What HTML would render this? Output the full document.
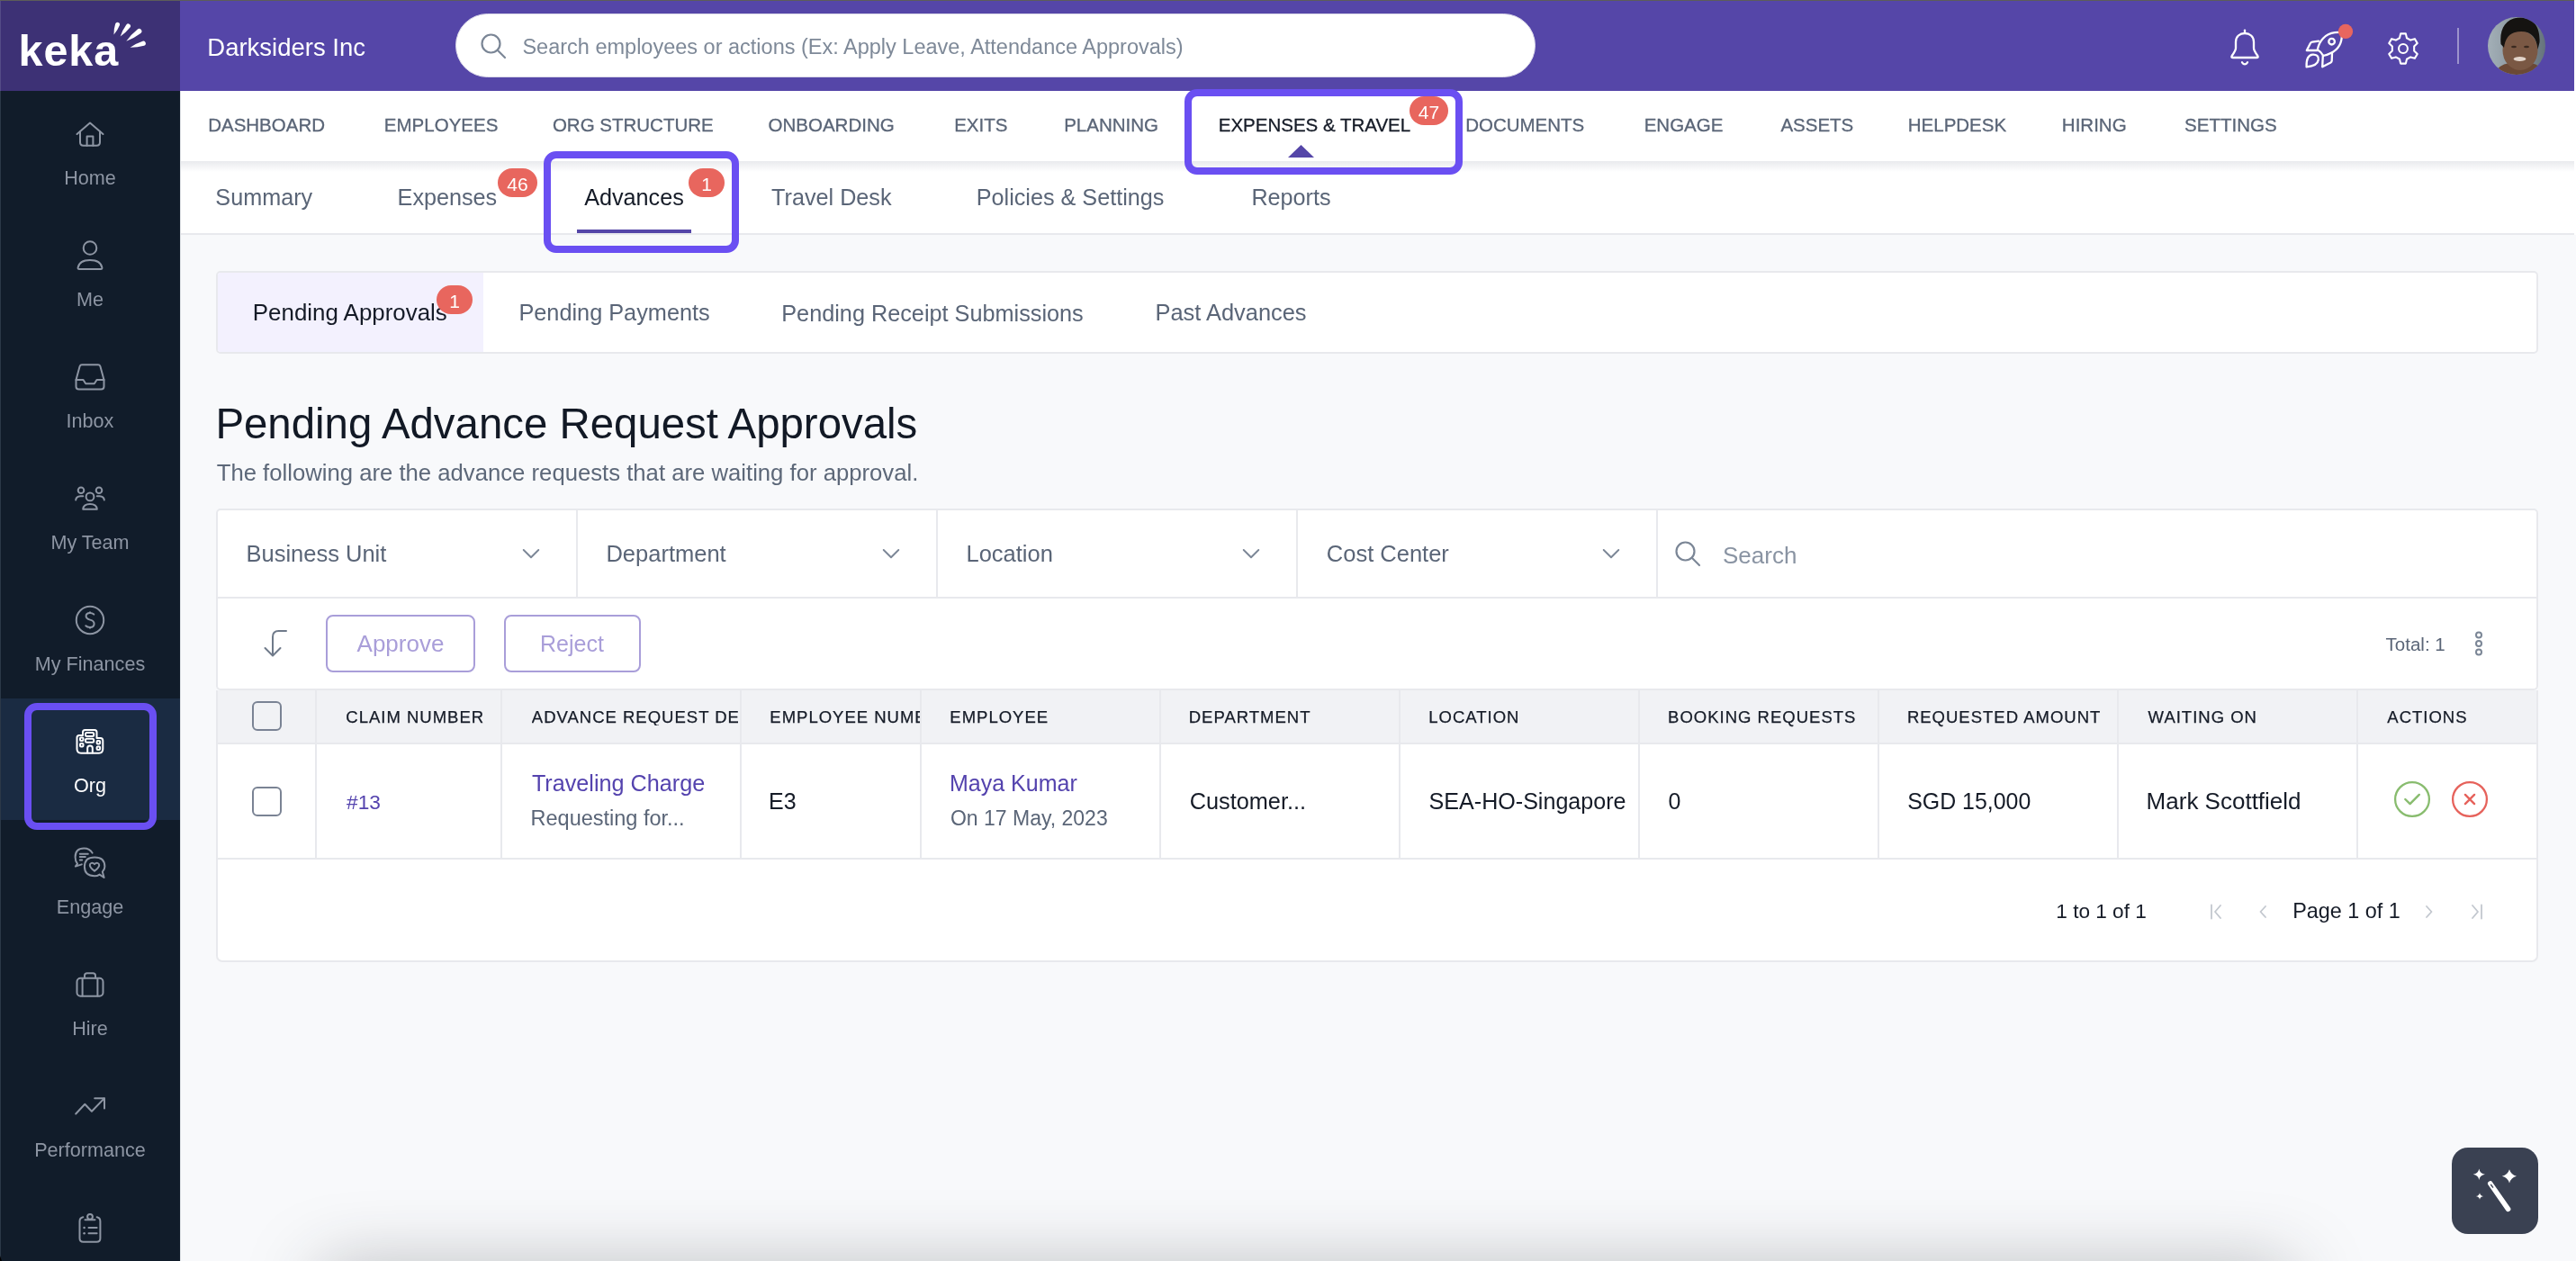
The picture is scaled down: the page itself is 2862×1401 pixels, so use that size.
<!DOCTYPE html>
<html><head><meta charset="utf-8"><title>Keka</title>
<style>
html,body{margin:0;padding:0;}
body{width:2862px;height:1401px;overflow:hidden;position:relative;will-change:transform;background:#f8f9fb;font-family:"Liberation Sans",sans-serif;}
.t{position:absolute;white-space:nowrap;-webkit-font-smoothing:antialiased;}
.r{position:absolute;}
</style></head><body>
<div class="r" style="left:0px;top:0px;width:2862px;height:1401px;background:#f8f9fb;"></div>
<div class="r" style="left:0px;top:0px;width:2862px;height:1px;background:#5d5d59;"></div>
<div class="r" style="left:0px;top:1px;width:200px;height:100px;background:#3d3175;"></div>
<div class="r" style="left:200px;top:1px;width:2660px;height:100px;background:#5546a8;"></div>
<div class="r" style="left:2860px;top:0px;width:2px;height:1401px;background:#f8f9fb;"></div>
<div class="r" style="left:2860px;top:1px;width:2px;height:260px;background:#ffffff;"></div>
<div class="r" style="left:0px;top:101px;width:200px;height:1300px;background:#111c2a;"></div>
<div class="r" style="left:0px;top:776px;width:200px;height:135px;background:#1a2b42;"></div>
<div class="r" style="left:200px;top:101px;width:1px;height:1300px;background:#dfe2e6;"></div>
<div class="r" style="left:0px;top:1px;width:1px;height:100px;background:#544b87;"></div>
<div class="r" style="left:0px;top:101px;width:1px;height:1300px;background:#2b3847;"></div>
<div class="r" style="left:0px;top:1395px;width:3px;height:6px;background:#000000;clip-path:polygon(0 0,2px 6px,0 6px);"></div>
<div class="r" style="left:201px;top:101px;width:2659px;height:78px;background:#ffffff;"></div>
<div class="r" style="left:201px;top:179px;width:2659px;height:80px;background:#ffffff;"></div>
<div class="r" style="left:201px;top:179px;width:2659px;height:12px;background:linear-gradient(#e9eaed,rgba(255,255,255,0));"></div>
<div class="r" style="left:201px;top:259px;width:2659px;height:2px;background:#e8e9ed;"></div>
<div class="t" style="top:32.14px;font-size:48.5px;line-height:48.5px;color:#ffffff;font-weight:700;left:20.61px;letter-spacing:0.9px;">keka</div>
<svg class="r" style="left:110px;top:20px;" width="60" height="45" viewBox="0 0 60 45" fill="none"><g fill="#fff"><path d="M16.50 18.50 Q20.78 13.66 22.95 8.05 A2.5 2.5 0 0 0 18.25 6.35 Q16.32 12.04 16.50 18.50 Z"/><path d="M23.70 20.40 Q30.01 16.20 34.47 10.58 A2.6 2.6 0 0 0 30.33 7.42 Q26.09 13.20 23.70 20.40 Z"/><path d="M30.30 25.70 Q39.07 22.31 46.31 16.92 A2.8 2.8 0 0 0 42.89 12.48 Q35.83 18.09 30.30 25.70 Z"/><path d="M34.60 32.80 Q42.69 32.86 50.08 30.68 A2.6 2.6 0 0 0 48.52 25.72 Q41.21 28.14 34.60 32.80 Z"/></g></svg>
<div class="t" style="top:38.82px;font-size:27.5px;line-height:27.5px;color:#ffffff;left:230.30px;">Darksiders Inc</div>
<div class="r" style="left:506px;top:15px;width:1200px;height:71px;background:#ffffff;box-sizing:border-box;border:1.5px solid #d9d7e8;border-radius:36px;"></div>
<svg class="r" style="left:533px;top:36px;" width="32" height="32" viewBox="0 0 32 32" fill="none"><circle cx="12.5" cy="12.5" r="10" stroke="#7b8696" stroke-width="2.2"/><path d="M20 20 L28 28" stroke="#7b8696" stroke-width="2.2" stroke-linecap="round"/></svg>
<div class="t" style="top:40.71px;font-size:23.5px;line-height:23.5px;color:#7e8998;left:580.44px;">Search employees or actions (Ex: Apply Leave, Attendance Approvals)</div>
<svg class="r" style="left:2470px;top:20px;" width="150" height="66" viewBox="0 0 150 66" fill="none"><g stroke="#fff" stroke-width="2.3" stroke-linecap="round" stroke-linejoin="round"><path d="M24 13.6 V16.4"/><path d="M14 33.5 V26.5 C14 20.5 18.5 17 24 17 C29.5 17 34 20.5 34 26.5 V33.5 C34 36 36.5 39.5 38.3 42 Q39.5 44 37 44 H11 Q8.5 44 9.7 42 C11.5 39.5 14 36 14 33.5 Z"/><path d="M21 49.3 Q24 53.5 27 49.3"/><path d="M104.8 35.2 C106.5 26 113 17.5 124 16.2 Q130.5 15.3 131.5 17 Q132.5 19 131.2 25 C129.3 34 121.5 39.5 111.2 42 Q109 37.5 104.8 35.2 Z"/><circle cx="120.6" cy="26.2" r="3.3"/><path d="M106 25.6 L99 26.6 Q97.5 26.8 96.8 28.2 L92.8 36 L104.6 36"/><path d="M121 39.5 L120.7 47.5 Q120.6 48.8 119.5 49.4 L110.2 54.2 L110.8 42.3"/><path d="M92.6 54.3 C92.3 47 94 41 99.5 40.6 C103.5 40.3 106.5 42.5 105.8 46.5 C105 51.5 99 53.8 92.6 54.3 Z"/></g><circle cx="136" cy="14.9" r="8.1" fill="#e8665e"/></svg>
<svg class="r" style="left:2651px;top:35.2px;" width="38" height="38" viewBox="0 0 38 38" fill="none"><g stroke="#fff" stroke-width="2.2" stroke-linejoin="round"><g transform="scale(0.95)"><path d="M17 2.5 H23 L24.2 7.6 L28.6 10.1 L33.6 8.6 L36.6 13.8 L32.8 17.4 V22.6 L36.6 26.2 L33.6 31.4 L28.6 29.9 L24.2 32.4 L23 37.5 H17 L15.8 32.4 L11.4 29.9 L6.4 31.4 L3.4 26.2 L7.2 22.6 V17.4 L3.4 13.8 L6.4 8.6 L11.4 10.1 L15.8 7.6 Z"/><circle cx="20" cy="20" r="5.2"/></g></g></svg>
<div class="r" style="left:2730px;top:31px;width:2px;height:40px;background:rgba(255,255,255,0.42);"></div>
<svg class="r" style="left:2764px;top:19px;" width="64" height="64" viewBox="0 0 64 64" fill="none"><defs><clipPath id="av"><circle cx="32" cy="32" r="32"/></clipPath><linearGradient id="bgav" x1="0" y1="0" x2="1" y2="0"><stop offset="0" stop-color="#a3afb7"/><stop offset="0.55" stop-color="#87949c"/><stop offset="1" stop-color="#65737c"/></linearGradient></defs><g clip-path="url(#av)"><rect width="64" height="64" fill="url(#bgav)"/><path d="M6 66 Q10 53 24 51 H48 Q60 53 64 66 Z" fill="#6b4936"/><ellipse cx="36" cy="37" rx="19.5" ry="22" fill="#7a5844"/><path d="M14.5 30 C12.5 11 22 0.5 36 0.5 C50 0.5 58.5 10 57.5 28 L55.5 36 C54.5 23 48.5 16 37 16 C25.5 16 19.5 22 18 34 Z" fill="#151311"/><ellipse cx="29" cy="33" rx="3" ry="1.3" fill="#3b2a20"/><ellipse cx="43" cy="33" rx="3" ry="1.3" fill="#3b2a20"/><ellipse cx="35.5" cy="46.5" rx="6.8" ry="2.5" fill="#e2d4ca"/></g></svg>
<div class="t" style="top:186.72px;font-size:21.6px;line-height:21.6px;color:#8d95a3;left:0.00px;width:200px;text-align:center;">Home</div>
<div class="t" style="top:321.72px;font-size:21.6px;line-height:21.6px;color:#8d95a3;left:0.00px;width:200px;text-align:center;">Me</div>
<div class="t" style="top:456.72px;font-size:21.6px;line-height:21.6px;color:#8d95a3;left:0.00px;width:200px;text-align:center;">Inbox</div>
<div class="t" style="top:591.72px;font-size:21.6px;line-height:21.6px;color:#8d95a3;left:0.00px;width:200px;text-align:center;">My Team</div>
<div class="t" style="top:726.72px;font-size:21.6px;line-height:21.6px;color:#8d95a3;left:0.00px;width:200px;text-align:center;">My Finances</div>
<div class="t" style="top:861.72px;font-size:21.6px;line-height:21.6px;color:#ffffff;left:0.00px;width:200px;text-align:center;">Org</div>
<div class="t" style="top:996.72px;font-size:21.6px;line-height:21.6px;color:#8d95a3;left:0.00px;width:200px;text-align:center;">Engage</div>
<div class="t" style="top:1131.72px;font-size:21.6px;line-height:21.6px;color:#8d95a3;left:0.00px;width:200px;text-align:center;">Hire</div>
<div class="t" style="top:1266.72px;font-size:21.6px;line-height:21.6px;color:#8d95a3;left:0.00px;width:200px;text-align:center;">Performance</div>
<svg class="r" style="left:80px;top:129px;" width="40" height="40" viewBox="0 0 40 40" fill="none"><g stroke="#8d95a3" stroke-width="2" stroke-linecap="round" stroke-linejoin="round"><path d="M5.5 20 L20 7.5 L34.5 20"/><path d="M9 17 V29 Q9 32.7 12.7 32.7 H27.3 Q31 32.7 31 29 V17"/><path d="M16.6 32.7 V22.4 H23.4 V32.7"/></g></svg>
<svg class="r" style="left:80px;top:264px;" width="40" height="40" viewBox="0 0 40 40" fill="none"><g stroke="#8d95a3" stroke-width="2" stroke-linecap="round" stroke-linejoin="round"><circle cx="20" cy="11.5" r="7.3"/><path d="M6.6 33.4 C7.5 28 12 24.9 20 24.9 C28 24.9 32.5 28 33.4 33.4 Q33.6 35 32 35 H8 Q6.4 35 6.6 33.4 Z"/></g></svg>
<svg class="r" style="left:80px;top:399.9px;" width="40" height="40" viewBox="0 0 40 40" fill="none"><g stroke="#8d95a3" stroke-width="2" stroke-linecap="round" stroke-linejoin="round"><path d="M8.6 7 Q9.2 5.2 11 5.2 H29 Q30.8 5.2 31.4 7 L35.5 22 V29.5 Q35.5 32.6 32.4 32.6 H7.6 Q4.5 32.6 4.5 29.5 V22 Z"/><path d="M4.5 22 H12.5 L15.2 26.3 H24.8 L27.5 22 H35.5"/></g></svg>
<svg class="r" style="left:80px;top:534px;" width="40" height="40" viewBox="0 0 40 40" fill="none"><g stroke="#8d95a3" stroke-width="2" stroke-linecap="round" stroke-linejoin="round"><circle cx="10" cy="10.8" r="3.3"/><circle cx="30" cy="10.8" r="3.3"/><circle cx="20" cy="17.9" r="4.4"/><path d="M4.2 21.5 Q4.5 17.5 9.5 17.3 H12.2"/><path d="M35.8 21.5 Q35.5 17.5 30.5 17.3 H27.8"/><path d="M12.2 31.8 Q12.6 26 20 26 Q27.4 26 27.8 31.8 Z"/></g></svg>
<svg class="r" style="left:80px;top:669px;" width="40" height="40" viewBox="0 0 40 40" fill="none"><g stroke="#8d95a3" stroke-width="2" stroke-linecap="round" stroke-linejoin="round"><circle cx="20" cy="20" r="15.2"/><path d="M24.3 13.6 Q22.5 12 19.9 12 Q15.6 12 15.6 15.6 Q15.6 18.4 20 19.6 Q24.6 20.8 24.6 24 Q24.6 28 20 28 Q17 28 15.3 26.3"/><path d="M20 10.6 V12 M20 28 V29.4" stroke-linecap="butt"/></g></svg>
<svg class="r" style="left:80px;top:803.2px;" width="40" height="40" viewBox="0 0 40 40" fill="none"><g stroke="#ffffff" stroke-width="2" stroke-linecap="round" stroke-linejoin="round"><path d="M5.5 29 V16.5 Q5.5 14 8 14 H12 V10.5 Q12 8 14.5 8 H25 Q27.5 8 27.5 10.5 V17 H31.5 Q34.3 17 34.3 19.8 V29 Q34.3 33.7 30 33.7 H10 Q5.5 33.7 5.5 29 Z"/><rect x="15" y="11" width="9.2" height="4" rx="1.5"/><rect x="15" y="17.7" width="9.2" height="4" rx="1.5"/><rect x="9" y="16.5" width="3.5" height="3.5" rx="1"/><rect x="9" y="23" width="3.5" height="3.5" rx="1"/><rect x="27.6" y="20" width="3.5" height="3.5" rx="1"/><rect x="27.6" y="26.6" width="3.5" height="3.5" rx="1"/><path d="M17.2 33.5 V28.3 Q17.2 25.6 20 25.6 Q22.8 25.6 22.8 28.3 V33.5"/></g></svg>
<svg class="r" style="left:80px;top:939px;" width="40" height="40" viewBox="0 0 40 40" fill="none"><g stroke="#8d95a3" stroke-width="2" stroke-linecap="round" stroke-linejoin="round"><path d="M22.6 8.6 Q19.8 3.4 13.3 3.4 Q3.6 3.4 3.6 13.2 Q3.6 17.8 6 20.6 L3.9 23.6 L10.8 21.4"/><path d="M8.8 9.8 H17.8 M8.8 13.1 H14.8 M8.8 16.6 H11.2"/><path d="M33.8 29.6 L35.6 36 L30.6 32.6 Q28.2 34.3 25.15 34.3 Q13.9 34.3 13.9 23.85 Q13.9 13.4 25.15 13.4 Q36.4 13.4 36.4 23.85 Q36.4 27 33.8 29.6 Z"/><path d="M25 28.6 C22.2 26.5 19.8 24.6 19.8 22.2 C19.8 19.8 22.9 18.8 25 21.1 C27.1 18.8 30.2 19.8 30.2 22.2 C30.2 24.6 27.8 26.5 25 28.6 Z"/></g></svg>
<svg class="r" style="left:80px;top:1074px;" width="40" height="40" viewBox="0 0 40 40" fill="none"><g stroke="#8d95a3" stroke-width="2" stroke-linecap="round" stroke-linejoin="round"><rect x="5.5" y="12.8" width="29" height="19.9" rx="4"/><path d="M14 12.8 V9.9 Q14 7.2 16.7 7.2 H23.3 Q26 7.2 26 9.9 V12.8"/><path d="M11.6 13 V32.5 M28.4 13 V32.5"/></g></svg>
<svg class="r" style="left:80px;top:1209px;" width="40" height="40" viewBox="0 0 40 40" fill="none"><g stroke="#8d95a3" stroke-width="2" stroke-linecap="round" stroke-linejoin="round"><path d="M4.2 28.5 L14.3 17.8 L21.9 25.8 L35.8 11.4"/><path d="M25.2 11.2 H36 V22.6"/></g></svg>
<svg class="r" style="left:80px;top:1344px;" width="40" height="40" viewBox="0 0 40 40" fill="none"><g stroke="#8d95a3" stroke-width="2" stroke-linecap="round" stroke-linejoin="round"><path d="M12.3 8.3 Q8.5 9 8.5 13 V31.8 Q8.5 35.8 12.5 35.8 H27.4 Q31.4 35.8 31.4 31.8 V13 Q31.4 9 27.7 8.3"/><circle cx="20" cy="7.8" r="2.9"/><path d="M14.5 11.2 H25.5"/><path d="M18.5 20 H27.6 M18.5 26.3 H27.6"/><circle cx="13.6" cy="20" r="1.3" fill="#8d95a3" stroke="none"/><circle cx="13.6" cy="26.3" r="1.3" fill="#8d95a3" stroke="none"/></g></svg>
<div class="r" style="left:27px;top:781px;width:147px;height:141px;background:transparent;box-sizing:border-box;border:8px solid #6a4ff2;border-radius:14px;"></div>
<div class="t" style="top:129.25px;font-size:20.5px;line-height:20.5px;color:#5a6577;left:231.16px;-webkit-text-stroke:0.3px #5a6577;">DASHBOARD</div>
<div class="t" style="top:129.25px;font-size:20.5px;line-height:20.5px;color:#5a6577;left:426.86px;-webkit-text-stroke:0.3px #5a6577;">EMPLOYEES</div>
<div class="t" style="top:129.25px;font-size:20.5px;line-height:20.5px;color:#5a6577;left:613.88px;-webkit-text-stroke:0.3px #5a6577;">ORG STRUCTURE</div>
<div class="t" style="top:129.25px;font-size:20.5px;line-height:20.5px;color:#5a6577;left:853.58px;-webkit-text-stroke:0.3px #5a6577;">ONBOARDING</div>
<div class="t" style="top:129.25px;font-size:20.5px;line-height:20.5px;color:#5a6577;left:1060.16px;-webkit-text-stroke:0.3px #5a6577;">EXITS</div>
<div class="t" style="top:129.25px;font-size:20.5px;line-height:20.5px;color:#5a6577;left:1182.16px;-webkit-text-stroke:0.3px #5a6577;">PLANNING</div>
<div class="t" style="top:129.25px;font-size:20.5px;line-height:20.5px;color:#151b27;left:1353.76px;-webkit-text-stroke:0.3px #151b27;">EXPENSES & TRAVEL</div>
<div class="t" style="top:129.25px;font-size:20.5px;line-height:20.5px;color:#5a6577;left:1628.16px;-webkit-text-stroke:0.3px #5a6577;">DOCUMENTS</div>
<div class="t" style="top:129.25px;font-size:20.5px;line-height:20.5px;color:#5a6577;left:1826.66px;-webkit-text-stroke:0.3px #5a6577;">ENGAGE</div>
<div class="t" style="top:129.25px;font-size:20.5px;line-height:20.5px;color:#5a6577;left:1978.40px;-webkit-text-stroke:0.3px #5a6577;">ASSETS</div>
<div class="t" style="top:129.25px;font-size:20.5px;line-height:20.5px;color:#5a6577;left:2119.76px;-webkit-text-stroke:0.3px #5a6577;">HELPDESK</div>
<div class="t" style="top:129.25px;font-size:20.5px;line-height:20.5px;color:#5a6577;left:2290.86px;-webkit-text-stroke:0.3px #5a6577;">HIRING</div>
<div class="t" style="top:129.25px;font-size:20.5px;line-height:20.5px;color:#5a6577;left:2427.08px;-webkit-text-stroke:0.3px #5a6577;">SETTINGS</div>
<svg class="r" style="left:1431px;top:161px;" width="29" height="14" viewBox="0 0 29 14" fill="none"><path d="M0 14 L14.5 0 L29 14 Z" fill="#5546a8"/></svg>
<div class="r" style="left:1566px;top:107px;width:43px;height:32px;background:#e8665e;border-radius:16px;"></div>
<div class="t" style="top:113.82px;font-size:21px;line-height:21px;color:#fff;left:1566.00px;width:43px;text-align:center;">47</div>
<div class="r" style="left:1316px;top:99px;width:309px;height:95px;background:transparent;box-sizing:border-box;border:8px solid #6a4ff2;border-radius:14px;"></div>
<div class="t" style="top:207.27px;font-size:25.2px;line-height:25.2px;color:#5a6577;left:239.37px;">Summary</div>
<div class="t" style="top:207.27px;font-size:25.2px;line-height:25.2px;color:#5a6577;left:441.58px;">Expenses</div>
<div class="t" style="top:207.27px;font-size:25.2px;line-height:25.2px;color:#151b27;left:649.17px;">Advances</div>
<div class="t" style="top:207.27px;font-size:25.2px;line-height:25.2px;color:#5a6577;left:857.10px;">Travel Desk</div>
<div class="t" style="top:207.27px;font-size:25.2px;line-height:25.2px;color:#5a6577;left:1084.78px;">Policies & Settings</div>
<div class="t" style="top:207.27px;font-size:25.2px;line-height:25.2px;color:#5a6577;left:1390.38px;">Reports</div>
<div class="r" style="left:553px;top:187px;width:44px;height:32px;background:#e8665e;border-radius:16px;"></div>
<div class="t" style="top:194.32px;font-size:21px;line-height:21px;color:#fff;left:553.00px;width:44px;text-align:center;">46</div>
<div class="r" style="left:765px;top:187px;width:40px;height:32px;background:#e8665e;border-radius:16px;"></div>
<div class="t" style="top:194.32px;font-size:21px;line-height:21px;color:#fff;left:765.00px;width:40px;text-align:center;">1</div>
<div class="r" style="left:641px;top:255px;width:127px;height:4px;background:#5546a8;"></div>
<div class="r" style="left:604px;top:168px;width:217px;height:113px;background:transparent;box-sizing:border-box;border:8px solid #6a4ff2;border-radius:14px;"></div>
<div class="r" style="left:240px;top:301px;width:2580px;height:92px;background:#ffffff;box-sizing:border-box;border:2px solid #e8e9ed;border-radius:5px;"></div>
<div class="r" style="left:242px;top:303px;width:295px;height:88px;background:#f3f1fe;border-radius:3px 0 0 3px;"></div>
<div class="t" style="top:334.98px;font-size:25.9px;line-height:25.9px;color:#151b27;left:280.83px;">Pending Approvals</div>
<div class="t" style="top:335.48px;font-size:25.3px;line-height:25.3px;color:#5a6577;left:576.38px;">Pending Payments</div>
<div class="t" style="top:335.53px;font-size:25.25px;line-height:25.25px;color:#5a6577;left:868.28px;">Pending Receipt Submissions</div>
<div class="t" style="top:335.40px;font-size:25.4px;line-height:25.4px;color:#5a6577;left:1283.57px;">Past Advances</div>
<div class="r" style="left:485px;top:317px;width:40px;height:32px;background:#e8665e;border-radius:16px;"></div>
<div class="t" style="top:324.32px;font-size:21px;line-height:21px;color:#fff;left:485.00px;width:40px;text-align:center;">1</div>
<div class="t" style="top:446.58px;font-size:47.4px;line-height:47.4px;color:#121925;left:239.41px;">Pending Advance Request Approvals</div>
<div class="t" style="top:512.84px;font-size:25.7px;line-height:25.7px;color:#5d6879;left:240.69px;">The following are the advance requests that are waiting for approval.</div>
<div class="r" style="left:240px;top:565px;width:2580px;height:202px;background:#ffffff;box-sizing:border-box;border:2px solid #e8e9ed;border-radius:5px 5px 5px 5px;"></div>
<div class="r" style="left:240px;top:767px;width:2580px;height:302px;background:#ffffff;box-sizing:border-box;border:2px solid #e8e9ed;border-top:none;border-radius:0 0 7px 7px;"></div>
<div class="r" style="left:242px;top:663px;width:2576px;height:2px;background:#e8e9ed;"></div>
<div class="r" style="left:640px;top:567px;width:2px;height:96px;background:#e8e9ed;"></div>
<div class="r" style="left:1040px;top:567px;width:2px;height:96px;background:#e8e9ed;"></div>
<div class="r" style="left:1440px;top:567px;width:2px;height:96px;background:#e8e9ed;"></div>
<div class="r" style="left:1840px;top:567px;width:2px;height:96px;background:#e8e9ed;"></div>
<div class="t" style="top:603.01px;font-size:25.5px;line-height:25.5px;color:#5a6577;left:273.46px;">Business Unit</div>
<svg class="r" style="left:580px;top:609px;" width="20" height="12" viewBox="0 0 20 12" fill="none"><path d="M1.7 2 L10 10.2 L18.3 2" stroke="#7b8696" stroke-width="1.9" stroke-linecap="round" stroke-linejoin="round"/></svg>
<div class="t" style="top:603.01px;font-size:25.5px;line-height:25.5px;color:#5a6577;left:673.46px;">Department</div>
<svg class="r" style="left:980px;top:609px;" width="20" height="12" viewBox="0 0 20 12" fill="none"><path d="M1.7 2 L10 10.2 L18.3 2" stroke="#7b8696" stroke-width="1.9" stroke-linecap="round" stroke-linejoin="round"/></svg>
<div class="t" style="top:603.01px;font-size:25.5px;line-height:25.5px;color:#5a6577;left:1073.46px;">Location</div>
<svg class="r" style="left:1380px;top:609px;" width="20" height="12" viewBox="0 0 20 12" fill="none"><path d="M1.7 2 L10 10.2 L18.3 2" stroke="#7b8696" stroke-width="1.9" stroke-linecap="round" stroke-linejoin="round"/></svg>
<div class="t" style="top:603.01px;font-size:25.5px;line-height:25.5px;color:#5a6577;left:1473.82px;">Cost Center</div>
<svg class="r" style="left:1780px;top:609px;" width="20" height="12" viewBox="0 0 20 12" fill="none"><path d="M1.7 2 L10 10.2 L18.3 2" stroke="#7b8696" stroke-width="1.9" stroke-linecap="round" stroke-linejoin="round"/></svg>
<svg class="r" style="left:1860px;top:600px;" width="32" height="32" viewBox="0 0 32 32" fill="none"><circle cx="12.5" cy="12.5" r="10" stroke="#7b8696" stroke-width="2.2"/><path d="M20 20 L28 28" stroke="#7b8696" stroke-width="2.2" stroke-linecap="round"/></svg>
<div class="t" style="top:603.99px;font-size:26px;line-height:26px;color:#8a94a3;left:1914.03px;">Search</div>
<svg class="r" style="left:290px;top:698px;" width="32" height="34" viewBox="0 0 32 34" fill="none"><path d="M28 3 H19.5 Q13 3 13 9.5 V30" stroke="#6f7a8a" stroke-width="2" stroke-linecap="round" stroke-linejoin="round" fill="none"/><path d="M4.5 22 L13 30.5 L21.5 22" stroke="#6f7a8a" stroke-width="2" stroke-linecap="round" stroke-linejoin="round" fill="none"/></svg>
<div class="r" style="left:362px;top:683px;width:166px;height:64px;background:transparent;box-sizing:border-box;border:2px solid #a99ed9;border-radius:8px;"></div>
<div class="t" style="top:702.39px;font-size:26px;line-height:26px;color:#a99ed9;left:396.57px;">Approve</div>
<div class="r" style="left:560px;top:683px;width:152px;height:64px;background:transparent;box-sizing:border-box;border:2px solid #a99ed9;border-radius:8px;"></div>
<div class="t" style="top:703.24px;font-size:25px;line-height:25px;color:#a99ed9;left:600.00px;">Reject</div>
<div class="t" style="top:706.35px;font-size:20.5px;line-height:20.5px;color:#5a6577;left:2650.59px;">Total: 1</div>
<svg class="r" style="left:2744px;top:696px;" width="20" height="38" viewBox="0 0 20 38" fill="none"><g stroke="#7b8696" stroke-width="2"><circle cx="10" cy="9.4" r="3"/><circle cx="10" cy="19" r="3"/><circle cx="10" cy="28.5" r="3"/></g></svg>
<div class="r" style="left:242px;top:767px;width:2576px;height:58px;background:#f1f2f5;"></div>
<div class="r" style="left:242px;top:825px;width:2576px;height:2px;background:#e8e9ed;"></div>
<div class="r" style="left:350px;top:767px;width:2px;height:186px;background:#e8e9ed;"></div>
<div class="r" style="left:556px;top:767px;width:2px;height:186px;background:#e8e9ed;"></div>
<div class="r" style="left:822px;top:767px;width:2px;height:186px;background:#e8e9ed;"></div>
<div class="r" style="left:1022px;top:767px;width:2px;height:186px;background:#e8e9ed;"></div>
<div class="r" style="left:1288px;top:767px;width:2px;height:186px;background:#e8e9ed;"></div>
<div class="r" style="left:1554px;top:767px;width:2px;height:186px;background:#e8e9ed;"></div>
<div class="r" style="left:1820px;top:767px;width:2px;height:186px;background:#e8e9ed;"></div>
<div class="r" style="left:2086px;top:767px;width:2px;height:186px;background:#e8e9ed;"></div>
<div class="r" style="left:2352px;top:767px;width:2px;height:186px;background:#e8e9ed;"></div>
<div class="r" style="left:2618px;top:767px;width:2px;height:186px;background:#e8e9ed;"></div>
<div class="r" style="left:242px;top:953px;width:2576px;height:2px;background:#e8e9ed;"></div>
<div class="r" style="left:279.5px;top:779.3px;width:33px;height:33px;background:transparent;box-sizing:border-box;border:2.8px solid #7a8394;border-radius:6px;"></div>
<div class="r" style="left:279.5px;top:873.5px;width:33px;height:33px;background:transparent;box-sizing:border-box;border:2.8px solid #7a8394;border-radius:6px;"></div>
<div class="t" style="top:788.24px;font-size:18.5px;line-height:18.5px;color:#151b27;letter-spacing:1px;left:384.27px;-webkit-text-stroke:0.25px #151b27;">CLAIM NUMBER</div>
<div class="t" style="left:590.81px;top:787.64px;width:229.19px;overflow:hidden;font-size:18.5px;line-height:18.5px;letter-spacing:1px;color:#151b27;-webkit-text-stroke:0.25px #151b27;">ADVANCE REQUEST DETAILS</div>
<div class="t" style="left:855.32px;top:787.64px;width:166.68px;overflow:hidden;font-size:18.5px;line-height:18.5px;letter-spacing:1px;color:#151b27;-webkit-text-stroke:0.25px #151b27;">EMPLOYEE NUMBER</div>
<div class="t" style="top:788.24px;font-size:18.5px;line-height:18.5px;color:#151b27;letter-spacing:1px;left:1055.32px;-webkit-text-stroke:0.25px #151b27;">EMPLOYEE</div>
<div class="t" style="top:788.24px;font-size:18.5px;line-height:18.5px;color:#151b27;letter-spacing:1px;left:1320.72px;-webkit-text-stroke:0.25px #151b27;">DEPARTMENT</div>
<div class="t" style="top:788.24px;font-size:18.5px;line-height:18.5px;color:#151b27;letter-spacing:1px;left:1587.22px;-webkit-text-stroke:0.25px #151b27;">LOCATION</div>
<div class="t" style="top:788.24px;font-size:18.5px;line-height:18.5px;color:#151b27;letter-spacing:1px;left:1853.12px;-webkit-text-stroke:0.25px #151b27;">BOOKING REQUESTS</div>
<div class="t" style="top:788.24px;font-size:18.5px;line-height:18.5px;color:#151b27;letter-spacing:1px;left:2118.92px;-webkit-text-stroke:0.25px #151b27;">REQUESTED AMOUNT</div>
<div class="t" style="top:788.24px;font-size:18.5px;line-height:18.5px;color:#151b27;letter-spacing:1px;left:2386.61px;-webkit-text-stroke:0.25px #151b27;">WAITING ON</div>
<div class="t" style="top:788.24px;font-size:18.5px;line-height:18.5px;color:#151b27;letter-spacing:1px;left:2652.31px;-webkit-text-stroke:0.25px #151b27;">ACTIONS</div>
<div class="t" style="top:879.98px;font-size:22.7px;line-height:22.7px;color:#5443ae;left:385.09px;">#13</div>
<div class="t" style="top:857.87px;font-size:25.2px;line-height:25.2px;color:#5443ae;left:590.90px;">Traveling Charge</div>
<div class="t" style="top:898.01px;font-size:23.5px;line-height:23.5px;color:#5a6577;left:589.52px;">Requesting for...</div>
<div class="t" style="top:878.04px;font-size:25px;line-height:25px;color:#151b27;left:854.10px;">E3</div>
<div class="t" style="top:858.04px;font-size:25px;line-height:25px;color:#5443ae;left:1055.00px;">Maya Kumar</div>
<div class="t" style="top:897.93px;font-size:23px;line-height:23px;color:#5a6577;left:1055.96px;">On 17 May, 2023</div>
<div class="t" style="top:877.78px;font-size:25.3px;line-height:25.3px;color:#151b27;left:1321.73px;">Customer...</div>
<div class="t" style="top:878.15px;font-size:25.1px;line-height:25.1px;color:#151b27;left:1587.57px;">SEA-HO-Singapore</div>
<div class="t" style="top:878.04px;font-size:25px;line-height:25px;color:#151b27;left:1853.60px;">0</div>
<div class="t" style="top:878.02px;font-size:24.9px;line-height:24.9px;color:#151b27;left:2119.28px;">SGD 15,000</div>
<div class="t" style="top:877.09px;font-size:26px;line-height:26px;color:#151b27;left:2384.62px;">Mark Scottfield</div>
<svg class="r" style="left:2658px;top:866px;" width="44" height="44" viewBox="0 0 44 44" fill="none"><circle cx="22" cy="22" r="18.9" stroke="#88bc6e" stroke-width="2.3"/><path d="M14.3 22 L19.6 27.1 L29.8 16.9" stroke="#88bc6e" stroke-width="2.4" stroke-linecap="round" stroke-linejoin="round"/></svg>
<svg class="r" style="left:2722px;top:866px;" width="44" height="44" viewBox="0 0 44 44" fill="none"><circle cx="22" cy="22" r="18.9" stroke="#e6625b" stroke-width="2.3"/><path d="M16.9 16.9 L27.1 27.1 M27.1 16.9 L16.9 27.1" stroke="#e6625b" stroke-width="2.4" stroke-linecap="round"/></svg>
<div class="t" style="top:1001.87px;font-size:22.6px;line-height:22.6px;color:#151b27;left:2284.30px;">1 to 1 of 1</div>
<div class="t" style="top:1001.19px;font-size:23.4px;line-height:23.4px;color:#151b27;left:2547.13px;">Page 1 of 1</div>
<svg class="r" style="left:2452px;top:1002px;" width="20" height="22" viewBox="0 0 20 22" fill="none"><path d="M5 3.5 V18.5 M15 4 L9 11 L15 18" stroke="#c3c8cf" stroke-width="1.8" stroke-linecap="round" stroke-linejoin="round"/></svg>
<svg class="r" style="left:2506px;top:1002px;" width="16" height="22" viewBox="0 0 16 22" fill="none"><path d="M11 5 L5.5 11 L11 17" stroke="#c3c8cf" stroke-width="1.8" stroke-linecap="round" stroke-linejoin="round"/></svg>
<svg class="r" style="left:2691px;top:1002px;" width="16" height="22" viewBox="0 0 16 22" fill="none"><path d="M5 5 L10.5 11 L5 17" stroke="#c3c8cf" stroke-width="1.8" stroke-linecap="round" stroke-linejoin="round"/></svg>
<svg class="r" style="left:2742px;top:1002px;" width="20" height="22" viewBox="0 0 20 22" fill="none"><path d="M5 4 L11 11 L5 18 M15 3.5 V18.5" stroke="#c3c8cf" stroke-width="1.8" stroke-linecap="round" stroke-linejoin="round"/></svg>
<div class="r" style="left:2724px;top:1275px;width:96px;height:96px;background:#3a4152;border-radius:18px;"></div>
<svg class="r" style="left:2724px;top:1275px;" width="96" height="96" viewBox="0 0 96 96" fill="none"><g fill="#fff"><path d="M64 24.200000000000003 Q65.80 30.13 72.2 31.8 Q65.80 33.47 64 39.4 Q62.20 33.47 55.8 31.8 Q62.20 30.13 64 24.200000000000003 Z"/><path d="M30.3 23.6 Q31.16 28.99 36.9 29.8 Q31.16 30.61 30.3 36.0 Q29.44 30.61 23.700000000000003 29.8 Q29.44 28.99 30.3 23.6 Z"/><path d="M31 50.2 Q31.55 53.51 35.2 54 Q31.55 54.49 31 57.8 Q30.45 54.49 26.8 54 Q30.45 53.51 31 50.2 Z"/></g><path d="M42.8 40 L62.6 68.3" stroke="#fff" stroke-width="5.6" stroke-linecap="round"/><path d="M43.6 41.3 L45.6 44.1" stroke="#3a4152" stroke-width="1.4" stroke-linecap="round"/></svg>
<div class="r" style="left:201px;top:1250px;width:2659px;height:151px;background:transparent;overflow:hidden;"><div style="position:absolute;left:150px;top:160px;width:2200px;height:50px;background:rgba(20,22,30,0.34);border-radius:40px;filter:blur(40px);"></div></div>
</body></html>
